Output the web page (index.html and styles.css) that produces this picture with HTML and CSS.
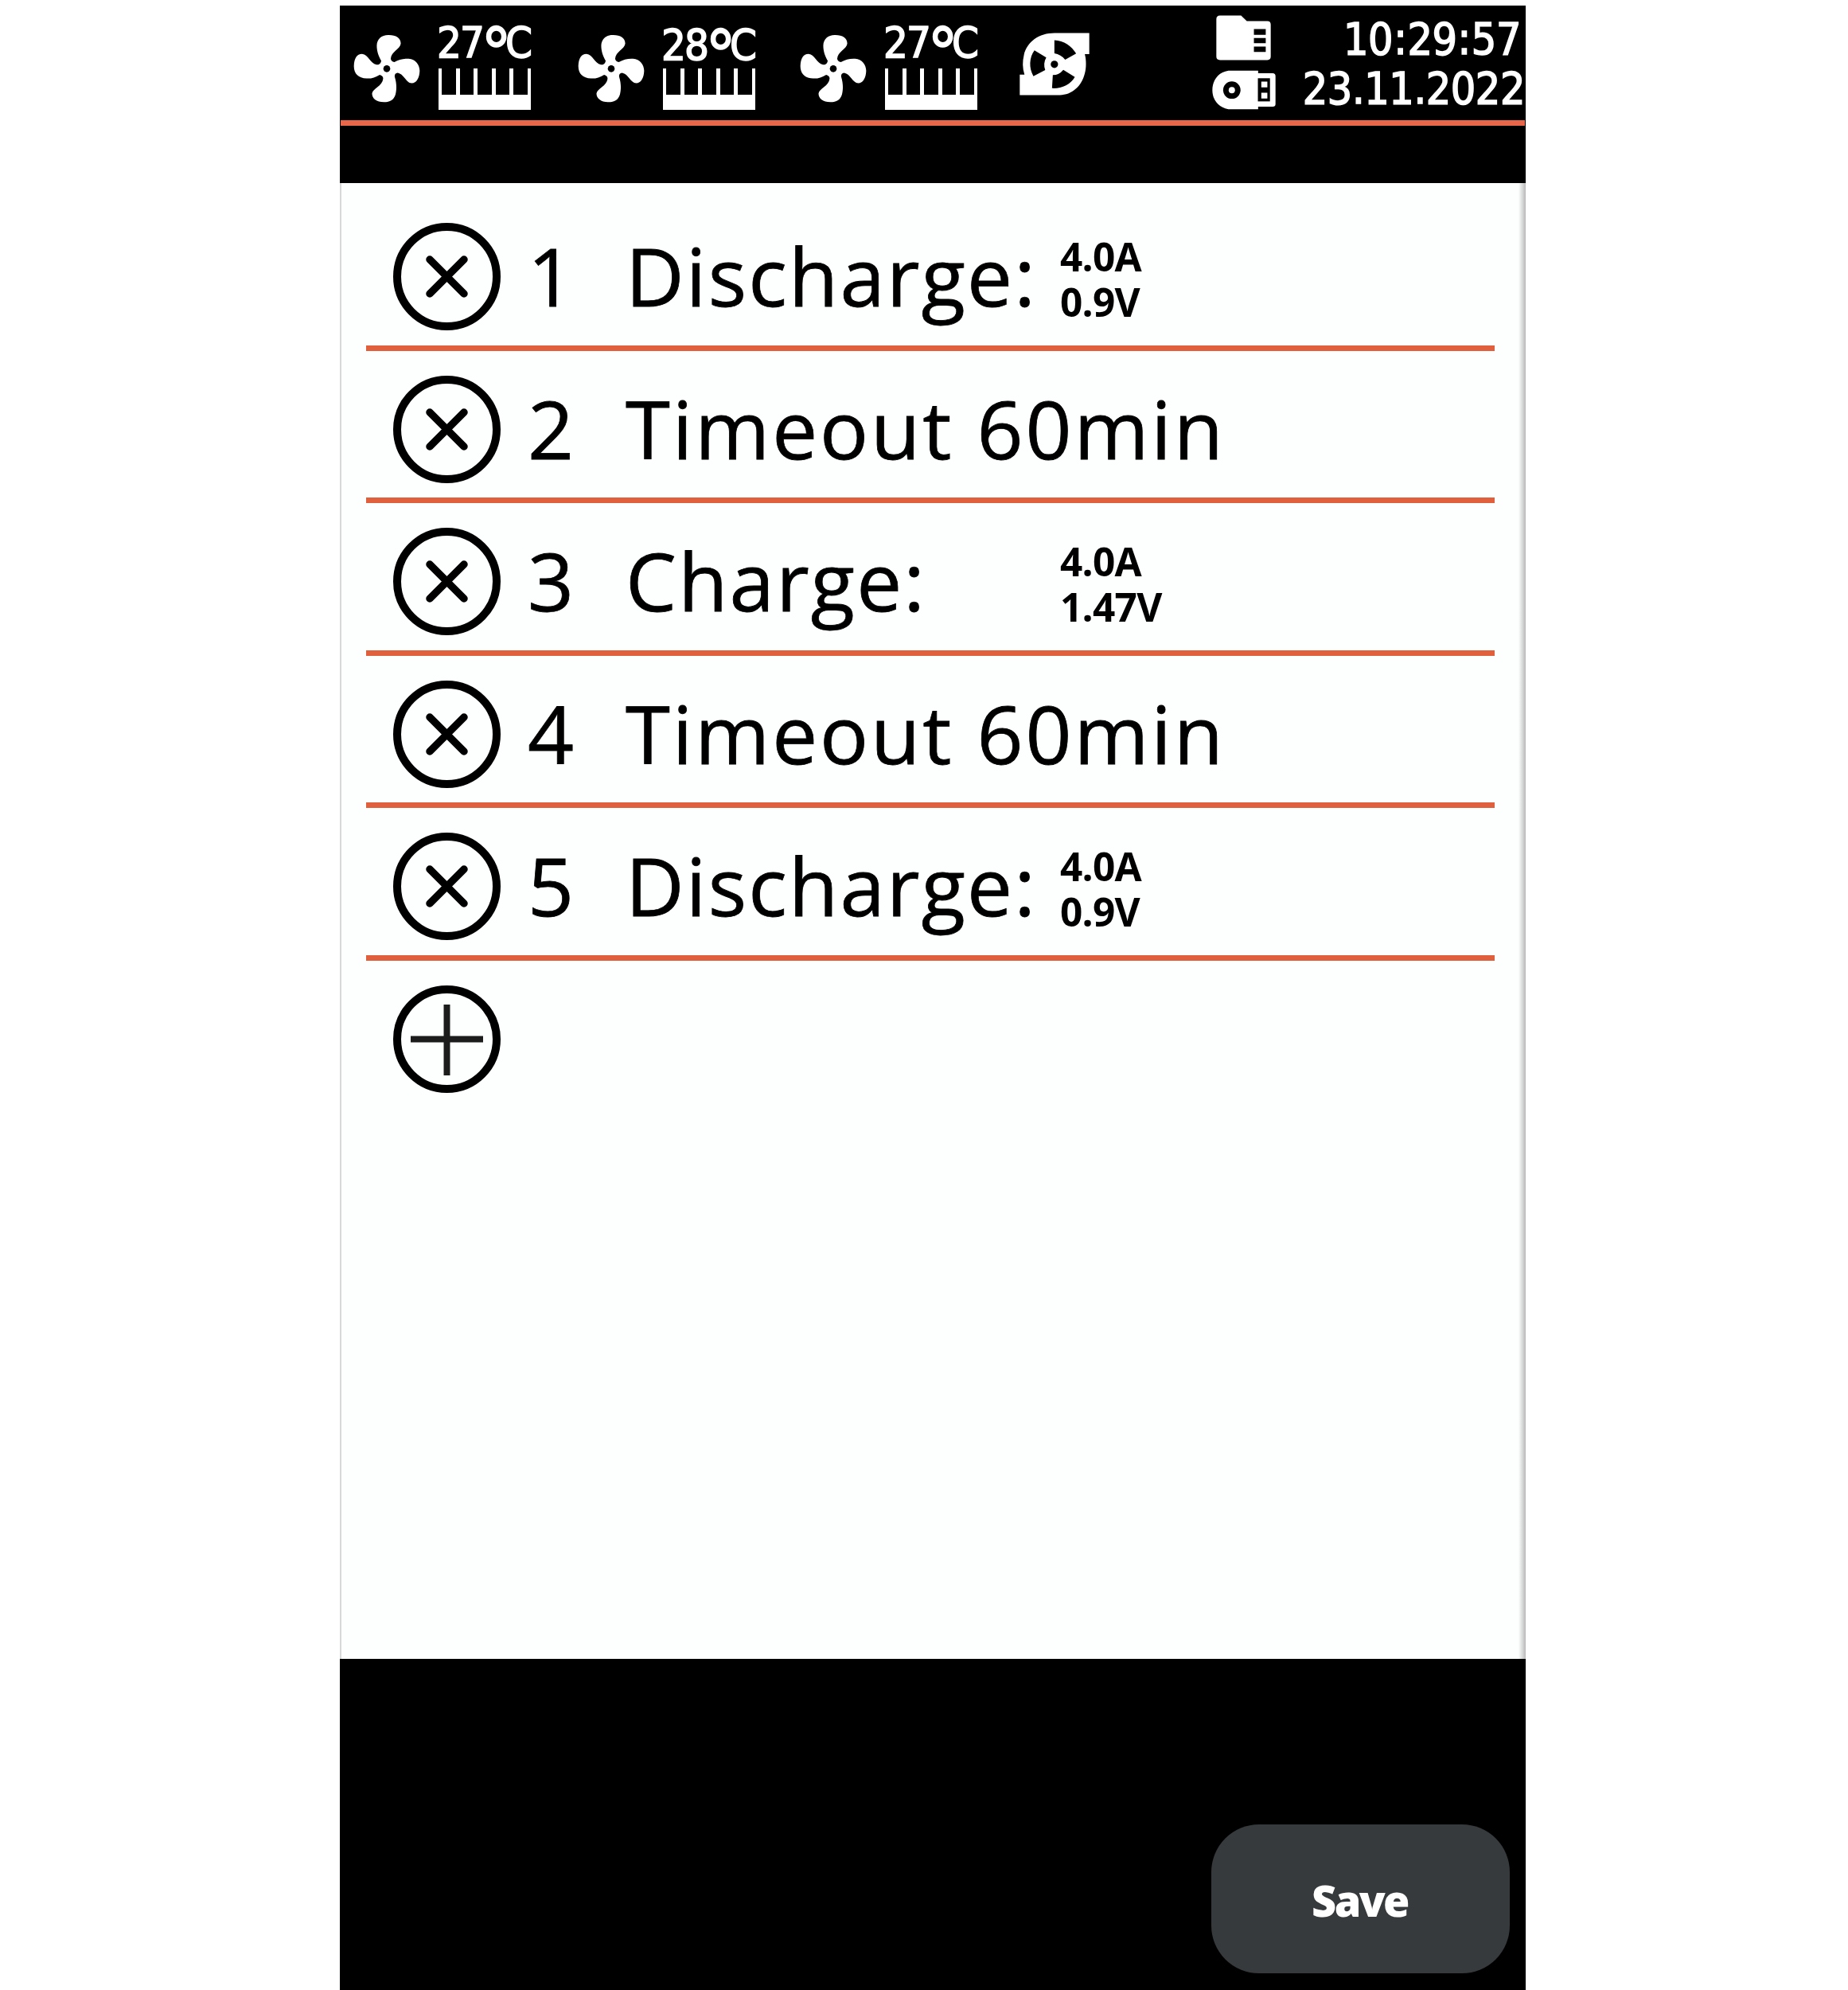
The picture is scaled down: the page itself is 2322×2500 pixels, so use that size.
FILE: index.html
```html
<!DOCTYPE html>
<html lang="en">
<head>
<meta charset="utf-8">
<title>Program steps</title>
<link rel="stylesheet" href="styles.css">
</head>
<body>
<svg class="defs" width="0" height="0" aria-hidden="true">
  <symbol id="fan" viewBox="72 129 254 260">
    <path fill="#fff" d="M178 230C168 212 161 195 161 172C162 146 180 131 207 132C235 132 253 144 252 165C250 185 215 195 214 222Q215 232 228 235C245 225 262 221 282 222C308 224 324 245 324 268C323 295 312 315 294 315C272 315 265 280 240 276Q228 278 229 290C238 320 236 340 232 358C226 378 212 387 188 387C160 386 143 373 143 354C145 335 183 325 185 298Q186 287 172 283C155 294 140 298 122 297C92 296 74 280 74 250C75 220 85 205 105 204C130 206 135 240 160 245Q175 245 178 230Z"/>
    <circle cx="199" cy="260" r="13"/>
  </symbol>
  <symbol id="scale" viewBox="0 0 116 52">
    <path fill="#fff" d="M0 0H4V33H22V0H27V33H44V0H49V33H67V0H72V33H89V0H94V33H112V0H116V52H0Z"/>
  </symbol>
  <symbol id="remove" viewBox="0 0 135 135">
    <circle cx="67.5" cy="67.5" r="62.5" fill="none" stroke="#000" stroke-width="10"/>
    <path d="M46 46L89 89M89 46L46 89" stroke="#000" stroke-width="9.5" stroke-linecap="round"/>
  </symbol>
</svg>
<main class="device">
  <header class="header">
    <div class="status">
      <div class="sensor">
        <svg class="fan"><use href="#fan"/></svg>
        <div class="temp"><span class="degrees">27<span class="ring">°</span>C</span><svg class="scale"><use href="#scale"/></svg></div>
      </div>
      <div class="sensor second">
        <svg class="fan"><use href="#fan"/></svg>
        <div class="temp"><span class="degrees">28<span class="ring">°</span>C</span><svg class="scale"><use href="#scale"/></svg></div>
      </div>
      <div class="sensor third">
        <svg class="fan"><use href="#fan"/></svg>
        <div class="temp"><span class="degrees">27<span class="ring">°</span>C</span><svg class="scale"><use href="#scale"/></svg></div>
      </div>
      <svg class="blower" viewBox="601 121 267 238">
        <path fill="#fff" d="M735 122H867V202H850C856 225 856 255 850 275C838 325 800 358 755 358H602V280H620C612 255 612 230 618 205C630 155 675 122 735 122Z"/>
        <path d="M734 149C770 150 800 172 817 200L775 223C765 210 750 202 734 199ZM658 188L703 215Q690 238 699 263L654 286C636 255 638 215 658 188ZM768 262L812 289C795 318 762 334 725 332L728 282Q752 282 768 262Z"/>
        <circle cx="734" cy="241" r="14"/>
      </svg>
      <div class="media">
        <svg class="folder" viewBox="143 57 209 171">
          <path fill="#fff" d="M158 58H238L260 79H338Q351 79 351 92V214Q351 227 338 227H158Q144 227 144 214V72Q144 58 158 58Z"/>
          <path d="M287 109H332V131H287ZM287 143H332V163H287ZM287 176H332V196H287Z"/>
        </svg>
        <svg class="usb" viewBox="128 265 242 149">
          <path fill="#fff" d="M190 266H303V276H358Q369 276 369 287V393Q369 403 358 403H303V413H190C150 405 129 375 129 340C129 305 150 272 190 266Z"/>
          <circle cx="203" cy="340" r="33"/>
          <circle cx="203" cy="340" r="12" fill="#fff"/>
          <path d="M302 295H348V383H302Z"/>
          <path fill="#fff" d="M315 308H338V330H315ZM315 350H338V372H315Z"/>
        </svg>
      </div>
      <div class="clock">
        <div class="time">10<i>:</i>29<i>:</i>57</div>
        <div class="date">23.11.2022</div>
      </div>
    </div>
  </header>
  <section class="steps">
    <div class="step">
      <svg class="button"><use href="#remove"/></svg>
      <span class="number">1</span><span class="name">Discharge:</span>
      <span class="limits">4.0A<br>0.9V</span>
    </div>
    <div class="step">
      <svg class="button"><use href="#remove"/></svg>
      <span class="number">2</span><span class="name timeout">Timeout 60min</span>
    </div>
    <div class="step">
      <svg class="button"><use href="#remove"/></svg>
      <span class="number">3</span><span class="name">Charge:</span>
      <span class="limits">4.0A<br>1.47V</span>
    </div>
    <div class="step">
      <svg class="button"><use href="#remove"/></svg>
      <span class="number">4</span><span class="name timeout">Timeout 60min</span>
    </div>
    <div class="step">
      <svg class="button"><use href="#remove"/></svg>
      <span class="number">5</span><span class="name">Discharge:</span>
      <span class="limits">4.0A<br>0.9V</span>
    </div>
    <div class="step add">
      <svg class="button" viewBox="0 0 135 135">
        <circle cx="67.5" cy="67.5" r="62.5" fill="none" stroke="#000" stroke-width="10"/>
        <path d="M22 67.5H113M67.5 24V113" stroke="#1c1c1c" stroke-width="8"/>
      </svg>
    </div>
  </section>
  <footer class="footer"><button class="save">Save</button></footer>
</main>
</body>
</html>
```
FILE: styles.css
```css
* { box-sizing: border-box; }
body { margin: 0; background: #fff; }
svg { display: block; flex: none; }
.defs { position: absolute; }

.device {
  width: 1490px;
  height: 2500px;
  margin-left: 427px;
  padding-top: 7px;
  display: flex;
  flex-direction: column;
  font-family: "Open Sans", sans-serif;
  color: #000;
}

.header { height: 223px; background: #000; color: #fff; }
.status {
  height: 151px;
  margin: 0 1px;
  padding-left: 16px;
  display: flex;
  align-items: flex-start;
  border-bottom: 7px solid #e8674a;
  font-family: "DejaVu Sans Condensed", "DejaVu Sans", sans-serif;
  font-stretch: condensed;
  -webkit-text-stroke: 1.6px #fff;
}
.sensor { display: flex; gap: 23px; }
.second { margin-left: 59px; }
.third { margin-left: 56px; }
.fan { width: 84px; height: 86px; margin-top: 36px; }
.temp { width: 116px; padding-top: 15px; }
.degrees {
  display: block;
  height: 64px;
  line-height: 64px;
  font-size: 54px;
  letter-spacing: -1.8px;
  margin-left: -2px;
  white-space: nowrap;
}
.ring {
  font-size: 86px;
  line-height: 0;
  vertical-align: -24px;
  letter-spacing: -8px;
  margin-left: -3px;
}
.second .degrees { position: relative; top: 3px; }
.scale { width: 116px; height: 52px; }
.blower { width: 88px; height: 79px; margin: 34px 0 0 53px; }
.media { margin: 12px 0 0 154px; }
.folder { width: 69px; height: 57px; margin-left: 5px; }
.usb { width: 80px; height: 50px; margin-top: 12px; }
.clock {
  flex: 1;
  padding-top: 11px;
  text-align: right;
  font-size: 55px;
  line-height: 62px;
  letter-spacing: -0.4px;
  white-space: nowrap;
}
.time { padding-right: 5px; }
.time i { font-style: normal; padding: 0 1px; }

.steps {
  flex: 1;
  padding: 19px 39px 0 31px;
  background: linear-gradient(to right, #fcfffe, #b8b8b8) right / 9px 100% no-repeat, #fdffff;
  border-left: 2px solid #d8d8d8;
}
.step {
  height: 191.5px;
  padding: 31px 0 0 34px;
  display: flex;
  border-bottom: 7px solid #e05f3c;
}
.add { border: 0; }
.button { width: 135px; height: 135px; }
.number, .name {
  font-size: 101.5px;
  line-height: 140px;
  margin-top: -4px;
  white-space: nowrap;
  -webkit-text-stroke: 0.8px #000;
}
.number { width: 123px; margin-left: 34px; }
.name { width: 546px; letter-spacing: 2.2px; }
.timeout { letter-spacing: 2.9px; }
.limits {
  font-size: 49.5px;
  font-weight: 700;
  line-height: 56.5px;
  margin-top: 14px;
  letter-spacing: -0.7px;
}

.footer {
  height: 416px;
  padding: 0 20px 21px 0;
  background: #000;
  display: flex;
  justify-content: flex-end;
  align-items: flex-end;
}
.save {
  width: 375px;
  height: 187px;
  border: 0;
  border-radius: 60px;
  padding: 2px 2px 0 0;
  background: #363a3d;
  color: #fff;
  font: 800 54px "Open Sans", sans-serif;
  letter-spacing: -2.6px;
}
```
